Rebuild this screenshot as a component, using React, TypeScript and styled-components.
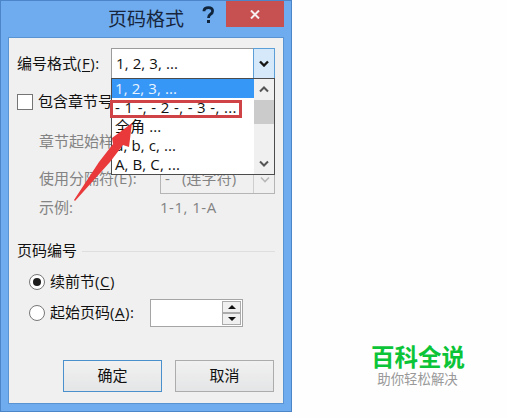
import React from 'react';
import styled, { createGlobalStyle } from 'styled-components';


const frameColor = '#6eabef';
const surfaceColor = '#f0f0f0';
const disabledColor = '#838383';
const markColor = '#cf4347';

const GlobalStyle = createGlobalStyle`
  body {
    margin: 0;
    background: #fefefe;
    color: #111111;
    font-family: 'Open Sans', 'Noto Sans CJK SC', sans-serif;
    font-size: 15px;
  }

  * {
    box-sizing: border-box;
  }
`;

const Page = styled.div`
  display: flex;
  align-items: flex-start;
  width: 507px;
  height: 418px;
  overflow: hidden;
`;

const Dialog = styled.div`
  display: flex;
  flex-direction: column;
  flex: none;
  width: 292px;
  height: 412px;
  padding: 0 7px 7px;
  background: ${frameColor};
  border: 1px solid #4c86c8;
`;

const TitleBar = styled.div`
  display: flex;
  align-items: flex-start;
  flex: none;
  height: 36px;
`;

const Title = styled.div`
  width: 118px;
  margin-left: 100px;
  padding-top: 4px;
  color: #17263c;
  font-size: 19px;
  line-height: 28px;
  white-space: nowrap;
`;

const Help = styled.svg`
  flex: none;
  width: 13px;
  height: 18px;
  margin: 5px 0 0 -23px;
`;

const Close = styled.div`
  display: flex;
  justify-content: center;
  align-items: center;
  width: 58px;
  height: 26px;
  margin-left: 11px;
  background: #c75050;
`;

const Body = styled.div`
  flex: 1;
  padding: 10px 9px 0 8px;
  background: ${surfaceColor};
  border: 1px solid #5a93d2;
`;

const Row = styled.div<{ $height: number; $indent?: number; $top?: number; $disabled?: boolean }>`
  display: flex;
  align-items: center;
  height: ${({ $height }) => $height}px;
  margin-top: ${({ $top = 0 }) => $top}px;
  padding-left: ${({ $indent = 0 }) => $indent}px;
  color: ${({ $disabled }) => ($disabled ? disabledColor : 'inherit')};
  white-space: nowrap;
`;

const Label = styled.div<{ $width?: number }>`
  flex: none;
  width: ${({ $width }) => ($width ? `${$width}px` : 'auto')};
  padding-bottom: 2px;
  line-height: 20px;
`;

const Latin = styled.span`
  letter-spacing: 0.5px;

  u {
    text-underline-offset: 2px;
    text-decoration-thickness: 1px;
  }
`;

const Select = styled.div<{ $width: number; $disabled?: boolean }>`
  position: relative;
  display: flex;
  align-items: center;
  flex: none;
  width: ${({ $width }) => $width}px;
  height: 100%;
  padding-left: 4px;
  background: ${({ $disabled }) => ($disabled ? surfaceColor : '#ffffff')};
  border: 1px solid ${({ $disabled }) => ($disabled ? '#b5b5b5' : '#9b9b9b')};
`;

const SelectValue = styled.div`
  padding-bottom: 2px;
  letter-spacing: 0.1px;
  line-height: 20px;
  white-space: pre;
`;

const SelectArrow = styled.div<{ $disabled?: boolean }>`
  display: flex;
  justify-content: center;
  align-items: center;
  width: 22px;
  height: ${({ $disabled }) => ($disabled ? '100%' : 'calc(100% + 2px)')};
  margin: 0 -1px 0 auto;
  background: ${({ $disabled }) => ($disabled ? 'transparent' : '#d5e9fa')};
  border: ${({ $disabled }) => ($disabled ? '0' : '1px solid #5b9fd6')};
  border-left: 1px solid ${({ $disabled }) => ($disabled ? '#cecece' : '#5b9fd6')};
`;

const Menu = styled.div`
  position: absolute;
  z-index: 1;
  top: 29px;
  left: -1px;
  display: flex;
  width: 164px;
  height: 97px;
  background: #ffffff;
  border: 1px solid #4c4c4c;
`;

const Options = styled.div`
  flex: 1;
`;

const Option = styled.div<{ $selected?: boolean; $spacing?: number }>`
  height: 19px;
  padding-left: 3px;
  background: ${({ $selected }) => ($selected ? '#3797f6' : 'transparent')};
  color: ${({ $selected }) => ($selected ? '#e9f4ff' : 'inherit')};
  letter-spacing: ${({ $spacing = 0.1 }) => $spacing}px;
  line-height: 18px;
`;

const Scrollbar = styled.div`
  display: flex;
  flex-direction: column;
  align-items: center;
  width: 20px;
  padding: 7px 0;
  background: ${surfaceColor};
`;

const Thumb = styled.div`
  width: 100%;
  height: 24px;
  margin: 7px 0 auto;
  background: #cbcbcb;
`;

const Highlight = styled.div`
  position: absolute;
  top: 21px;
  left: -2px;
  width: 132px;
  height: 18px;
  border: 3px solid ${markColor};
`;

const Pointer = styled.svg`
  position: absolute;
  z-index: 2;
  top: 67px;
  left: -39px;
  width: 64px;
  height: 86px;
`;

const Checkbox = styled.div`
  width: 16px;
  height: 16px;
  margin-right: 5px;
  background: #ffffff;
  border: 1px solid #757575;
`;

const Divider = styled.div`
  flex: 1;
  height: 1px;
  margin: 0 -1px 0 5px;
  background: #dedede;
`;

const Radio = styled.div`
  display: flex;
  justify-content: center;
  align-items: center;
  width: 16px;
  height: 16px;
  margin-right: 5px;
  background: #ffffff;
  border: 1px solid #777777;
  border-radius: 50%;
`;

const RadioDot = styled.div`
  width: 8px;
  height: 8px;
  background: #1d1d1d;
  border-radius: 50%;
`;

const NumberInput = styled.div`
  display: flex;
  justify-content: flex-end;
  width: 93px;
  height: 28px;
  padding: 1px;
  background: #ffffff;
  border: 1px solid #a5a5a5;
`;

const Spinner = styled.div`
  display: flex;
  flex-direction: column;
  width: 19px;
`;

const SpinnerButton = styled.div`
  display: flex;
  flex: 1;
  justify-content: center;
  align-items: center;
  background: ${surfaceColor};
  border: 1px solid #ababab;
`;

const Actions = styled.div`
  display: flex;
  gap: 13px;
  margin: 32px 0 0 46px;
`;

const Button = styled.div<{ $primary?: boolean }>`
  flex: none;
  width: 99px;
  height: 32px;
  background: linear-gradient(#f1f1f1, #e4e5e6);
  border: 1px solid ${({ $primary }) => ($primary ? '#4a90cc' : '#acacac')};
  line-height: 29px;
  text-align: center;
`;

const Brand = styled.div`
  margin: 342px 0 0 79px;
  text-align: center;
  white-space: nowrap;
`;

const BrandName = styled.div`
  color: #0bc437;
  font-family: 'Noto Sans CJK SC', sans-serif;
  font-size: 23.5px;
  font-weight: 700;
  line-height: 28px;
`;

const BrandSlogan = styled.div`
  padding-right: 1px;
  color: #999999;
  font-family: 'Noto Sans CJK SC', sans-serif;
  font-size: 13.4px;
  line-height: 16px;
`;

interface ChevronProps {
  up?: boolean;
  color?: string;
  weight?: number;
}

function Chevron({ up, color = '#555555', weight = 2 }: ChevronProps) {
  return (
    <svg width="10" height="7" viewBox="0 0 10 7">
      <path
        d={up ? 'M1 5.5 5 1.5 9 5.5' : 'M1 1.5 5 5.5 9 1.5'}
        fill="none"
        stroke={color}
        strokeWidth={weight}
      />
    </svg>
  );
}

function Triangle({ up }: { up?: boolean }) {
  return (
    <svg width="8" height="4" viewBox="0 0 8 4">
      <path d={up ? 'M0 4 4 0 8 4Z' : 'M0 0 4 4 8 0Z'} fill="#111111" />
    </svg>
  );
}

const options = [
  { label: '1, 2, 3, ...', selected: true },
  { label: '- 1 -, - 2 -, - 3 -, ...', spacing: 0.36 },
  { label: '全角 ...' },
  { label: 'a, b, c, ...' },
  { label: 'A, B, C, ...' },
];

function FormatSelect() {
  return (
    <Select $width={164}>
      <SelectValue>1, 2, 3, ...</SelectValue>
      <SelectArrow>
        <Chevron color="#151515" weight={2.4} />
      </SelectArrow>
      <Menu>
        <Options>
          {options.map(({ label, selected, spacing }) => (
            <Option key={label} $selected={selected} $spacing={spacing}>
              {label}
            </Option>
          ))}
        </Options>
        <Scrollbar>
          <Chevron up />
          <Thumb />
          <Chevron />
        </Scrollbar>
        <Highlight />
      </Menu>
      <Pointer viewBox="0 0 64 86">
        <path d="M1 84 26 46 40 28 39 22 59 7 56 31 50 29 37 46 2 85Z" fill="#e9393b" />
      </Pointer>
    </Select>
  );
}

export default function App() {
  return (
    <Page>
      <GlobalStyle />
      <Dialog>
        <TitleBar>
          <Title>页码格式</Title>
          <Help viewBox="0 0 13 18">
            <path
              d="M2 5.2V4.5Q2.4 1.6 6.4 1.6 10.6 1.6 10.6 5 10.6 7 8.5 8.2 6.5 9.4 6.5 12"
              fill="none"
              stroke="#10253c"
              strokeWidth="2.8"
            />
            <path d="M5 14h3v3H5Z" fill="#10253c" />
          </Help>
          <Close>
            <svg width="10" height="9" viewBox="0 0 10 9">
              <path d="M1 .5 9 8.5M9 .5 1 8.5" stroke="#f7eeee" strokeWidth="2" />
            </svg>
          </Close>
        </TitleBar>
        <Body>
          <Row $height={31}>
            <Label $width={94}>
              编号格式<Latin>(<u>F</u>):</Latin>
            </Label>
            <FormatSelect />
          </Row>
          <Row $height={30} $top={8}>
            <Checkbox />
            <Label>包含章节号</Label>
          </Row>
          <Row $height={30} $top={10} $indent={22} $disabled>
            <Label>章节起始样式</Label>
          </Row>
          <Row $height={30} $top={7} $indent={22} $disabled>
            <Label $width={121}>
              使用分隔符<Latin>(E):</Latin>
            </Label>
            <Select $width={115} $disabled>
              <SelectValue>{'-   (连字符)'}</SelectValue>
              <SelectArrow $disabled>
                <Chevron color="#b8b8b8" weight={1.6} />
              </SelectArrow>
            </Select>
          </Row>
          <Row $height={28} $indent={22} $disabled>
            <Label $width={121}>示例:</Label>
            <Label>
              <Latin>1-1, 1-A</Latin>
            </Label>
          </Row>
          <Row $height={26} $top={16}>
            <Label>页码编号</Label>
            <Divider />
          </Row>
          <Row $height={30} $top={3} $indent={12}>
            <Radio>
              <RadioDot />
            </Radio>
            <Label>
              续前节<Latin>(<u>C</u>)</Latin>
            </Label>
          </Row>
          <Row $height={30} $top={1} $indent={12}>
            <Radio />
            <Label $width={100}>
              起始页码<Latin>(<u>A</u>):</Latin>
            </Label>
            <NumberInput>
              <Spinner>
                <SpinnerButton>
                  <Triangle up />
                </SpinnerButton>
                <SpinnerButton>
                  <Triangle />
                </SpinnerButton>
              </Spinner>
            </NumberInput>
          </Row>
          <Actions>
            <Button $primary>确定</Button>
            <Button>取消</Button>
          </Actions>
        </Body>
      </Dialog>
      <Brand>
        <BrandName>百科全说</BrandName>
        <BrandSlogan>助你轻松解决</BrandSlogan>
      </Brand>
    </Page>
  );
}
